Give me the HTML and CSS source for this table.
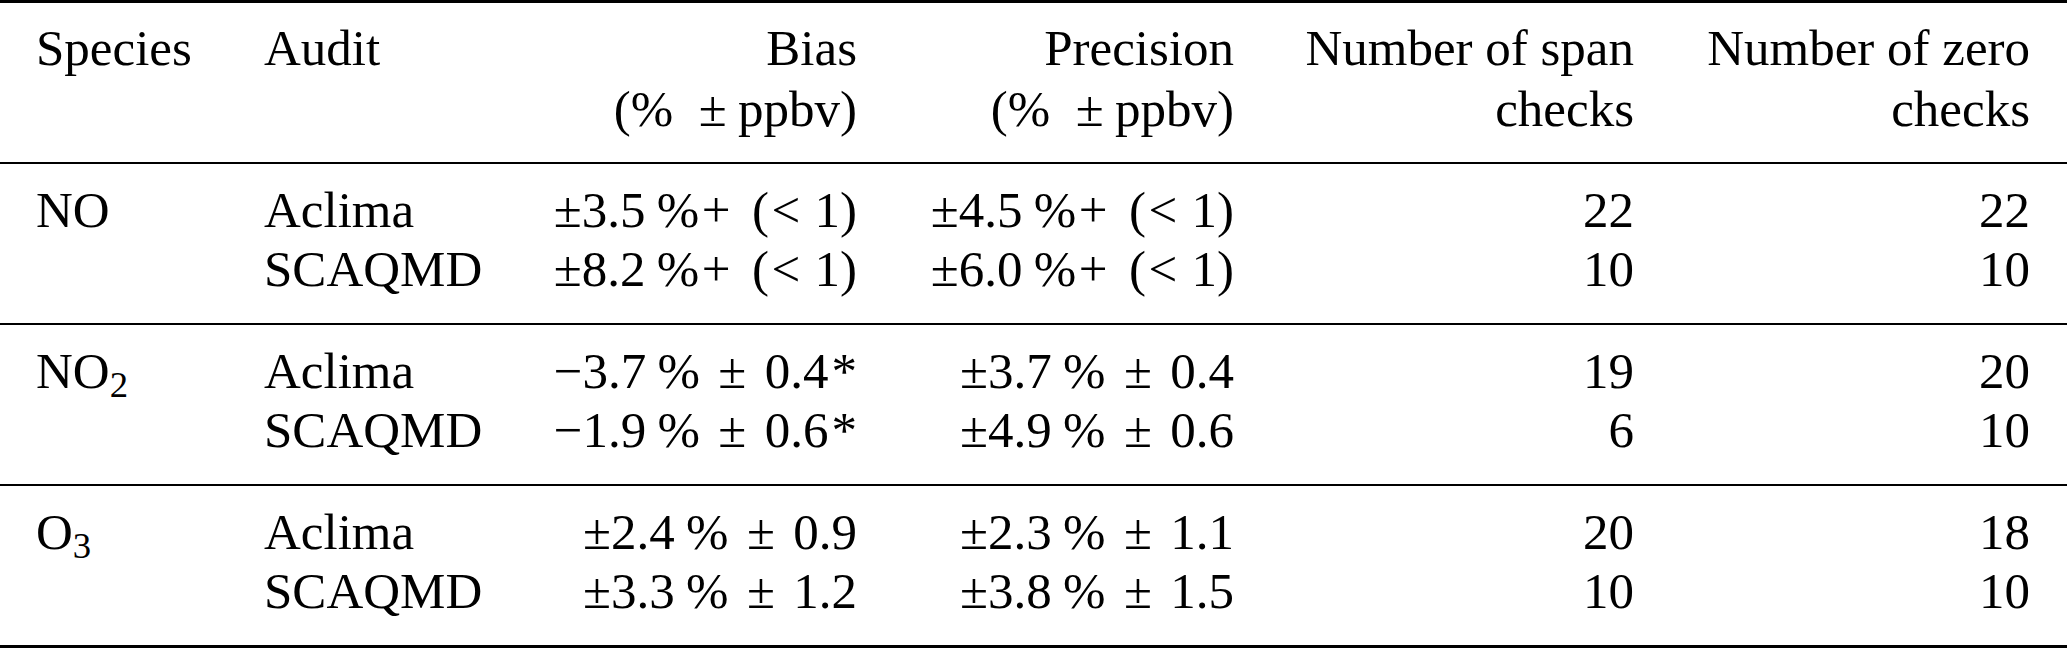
FILE: index.html
```html
<!DOCTYPE html>
<html lang="en">
<head>
<meta charset="utf-8">
<title>Audit results</title>
<link rel="stylesheet" href="styles.css">
</head>
<body>
<div class="tbl">
  <div class="sec head">
    <div class="c l">Species</div>
    <div class="c l">Audit</div>
    <div class="c r">Bias<br>(%<span class="pmh">±</span>ppbv)</div>
    <div class="c r">Precision<br>(%<span class="pmh">±</span>ppbv)</div>
    <div class="c r">Number of span<br>checks</div>
    <div class="c r">Number of zero<br>checks</div>
  </div>
  <div class="sec">
    <div class="c l">NO</div>
    <div class="c l">Aclima</div>
    <div class="c r">±3.5<span class="pc">%</span><span class="plus">+</span>(<span class="lt">&lt;</span>1)</div>
    <div class="c r">±4.5<span class="pc">%</span><span class="plus">+</span>(<span class="lt">&lt;</span>1)</div>
    <div class="c r">22</div>
    <div class="c r">22</div>
    <div class="c l"></div>
    <div class="c l">SCAQMD</div>
    <div class="c r">±8.2<span class="pc">%</span><span class="plus">+</span>(<span class="lt">&lt;</span>1)</div>
    <div class="c r">±6.0<span class="pc">%</span><span class="plus">+</span>(<span class="lt">&lt;</span>1)</div>
    <div class="c r">10</div>
    <div class="c r">10</div>
  </div>
  <div class="sec">
    <div class="c l">NO<sub>2</sub></div>
    <div class="c l">Aclima</div>
    <div class="c r">−3.7<span class="pc">%</span><span class="pm">±</span>0.4<span class="ast">*</span></div>
    <div class="c r">±3.7<span class="pc">%</span><span class="pm">±</span>0.4</div>
    <div class="c r">19</div>
    <div class="c r">20</div>
    <div class="c l"></div>
    <div class="c l">SCAQMD</div>
    <div class="c r">−1.9<span class="pc">%</span><span class="pm">±</span>0.6<span class="ast">*</span></div>
    <div class="c r">±4.9<span class="pc">%</span><span class="pm">±</span>0.6</div>
    <div class="c r">6</div>
    <div class="c r">10</div>
  </div>
  <div class="sec last">
    <div class="c l">O<sub>3</sub></div>
    <div class="c l">Aclima</div>
    <div class="c r">±2.4<span class="pc">%</span><span class="pm">±</span>0.9</div>
    <div class="c r">±2.3<span class="pc">%</span><span class="pm">±</span>1.1</div>
    <div class="c r">20</div>
    <div class="c r">18</div>
    <div class="c l"></div>
    <div class="c l">SCAQMD</div>
    <div class="c r">±3.3<span class="pc">%</span><span class="pm">±</span>1.2</div>
    <div class="c r">±3.8<span class="pc">%</span><span class="pm">±</span>1.5</div>
    <div class="c r">10</div>
    <div class="c r">10</div>
  </div>
</div>
</body>
</html>
```
FILE: styles.css
```css
html, body {
  margin: 0;
  padding: 0;
  background: #ffffff;
}

body {
  font-family: "Liberation Serif", "Times New Roman", serif;
  font-size: 51px;
  color: #000000;
  width: 2067px;
}

.tbl {
  border-top: 3px solid #000000;
  border-bottom: 3px solid #000000;
}

.sec {
  display: grid;
  grid-template-columns: 228px 236px 357px 377px 400px 396px;
  padding: 17px 37px 24px 36px;
  line-height: 59px;
  border-top: 2px solid #000000;
}

.sec.head {
  border-top: none;
  padding-top: 15px;
  padding-bottom: 22px;
  line-height: 61px;
}

.c {
  white-space: nowrap;
}

.l {
  text-align: left;
}

.r {
  text-align: right;
}

.pmh {
  margin: 0 0.22em 0 0.5em;
}

.pc {
  margin-left: 0.22em;
}

.pm {
  margin: 0 0.36em;
}

.plus {
  margin: 0 0.42em 0 0.05em;
}

.lt {
  margin: 0 0.28em 0 0.05em;
}

.ast {
  margin-left: 0.06em;
}

sub {
  font-size: 0.72em;
  line-height: 0;
  vertical-align: -0.24em;
}
```
